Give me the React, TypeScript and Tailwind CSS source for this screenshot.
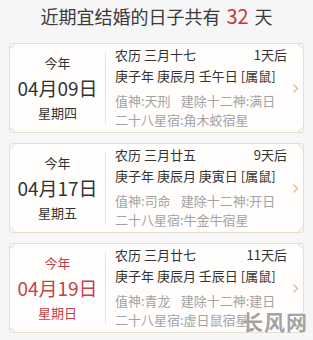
const days = [
  {
    lunar: "农历 三月十七",
    after: "1天后",
    gz: "庚子年 庚辰月 壬午日 [属鼠]",
    zhi: "值神:天刑",
    jian: "建除十二神:满日",
    xiu: "二十八星宿:角木蛟宿星",
    date: "04月09日",
    week: "星期四",
    red: false,
  },
  {
    lunar: "农历 三月廿五",
    after: "9天后",
    gz: "庚子年 庚辰月 庚寅日 [属鼠]",
    zhi: "值神:司命",
    jian: "建除十二神:开日",
    xiu: "二十八星宿:牛金牛宿星",
    date: "04月17日",
    week: "星期五",
    red: false,
  },
  {
    lunar: "农历 三月廿七",
    after: "11天后",
    gz: "庚子年 庚辰月 壬辰日 [属鼠]",
    zhi: "值神:青龙",
    jian: "建除十二神:建日",
    xiu: "二十八星宿:虚日鼠宿星",
    date: "04月19日",
    week: "星期日",
    red: true,
  },
];

function Notch({ pos }: { pos: string }) {
  return (
    <span
      className={`absolute w-[12px] h-[12px] rounded-full bg-[#f6f6f6] border border-[#e9dfcf] ${pos}`}
    />
  );
}

export default function App() {
  return (
    <div
      className="relative w-[313px] h-[340px] overflow-hidden bg-[#f6f6f6] text-[#333]"
      style={{ fontFamily: '"Noto Sans CJK SC", "Noto Sans", sans-serif' }}
    >
      <div className="h-[32px] flex items-center justify-center text-[18px] leading-none text-[#3a3a3a]">
        近期宜结婚的日子共有
        <span className="mx-[6px] text-[20px] text-[#c5373f]">32</span>天
      </div>

      <div className="mt-[11px] px-[9px] flex flex-col gap-[10px]">
        {days.map((d) => (
          <div
            key={d.date}
            className="relative h-[90px] flex bg-[#fffefc] border border-[#e9dfcf] rounded-[3px] overflow-hidden"
          >
            <Notch pos="-left-[7px] -top-[7px]" />
            <Notch pos="-right-[7px] -top-[7px]" />
            <Notch pos="-left-[7px] -bottom-[7px]" />
            <Notch pos="-right-[7px] -bottom-[7px]" />

            <div
              className={`w-[95px] flex flex-col items-center justify-center ${
                d.red ? "text-[#c5414a]" : "text-[#333]"
              }`}
            >
              <div className="text-[13px] leading-[20px]">今年</div>
              <div className="text-[19px] leading-[30px]">{d.date}</div>
              <div className="text-[13px] leading-[20px]">{d.week}</div>
            </div>

            <div className="my-[8px] w-px bg-[#ece4d6]" />

            <div className="flex-1 pl-[9px] pt-[1px] text-[13px] leading-[19px]">
              <div className="flex justify-between leading-[20px]">
                <span>{d.lunar}</span>
                <span>{d.after}</span>
              </div>
              <div className="leading-[21px]">{d.gz}</div>
              <div className="mt-[5px] text-[#a3a3a3]">
                {d.zhi}
                <span className="ml-[10px]">{d.jian}</span>
              </div>
              <div className="text-[#a3a3a3]">{d.xiu}</div>
            </div>

            <div className="w-[16px] flex items-center justify-center">
              <svg width="7" height="11" viewBox="0 0 7 11" fill="none">
                <path d="M1.5 1.5 L5.5 5.5 L1.5 9.5" stroke="#e8b98f" strokeWidth="1.3" />
              </svg>
            </div>
          </div>
        ))}
      </div>

      <div className="absolute right-[5px] top-[308px] text-[21px] font-bold leading-[26px] tracking-[1px] text-[#8a8a8a]/80 [text-shadow:0_0_2px_#fff]">
        长风网
      </div>
    </div>
  );
}
